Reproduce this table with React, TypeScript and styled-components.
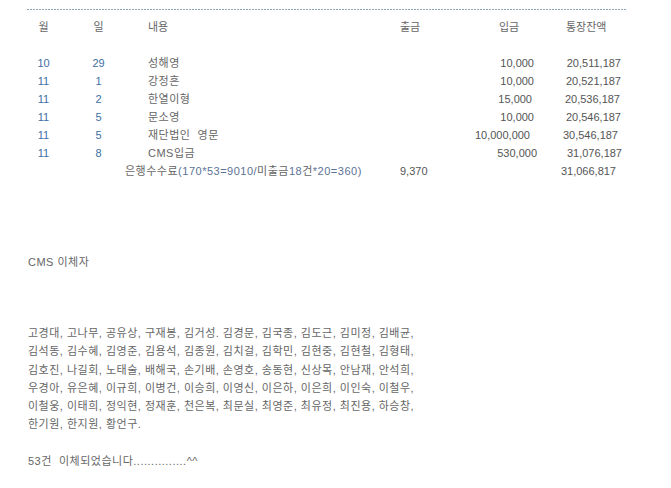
import React from "react";
import styled, { createGlobalStyle } from "styled-components";

const Global = createGlobalStyle`
  html, body { margin: 0; padding: 0; background: #fff; }
  body {
    font-family: "Liberation Sans", "Noto Sans CJK KR", sans-serif;
    font-size: 11px;
    color: #666;
  }
`;

const Page = styled.div`
  padding: 9px 27px 0 27px;
  width: 600px;
`;

const Rule = styled.div`
  height: 1px;
  width: 600px;
  background: repeating-linear-gradient(to right, #8ea4b8 0 2px, transparent 2px 3px);
`;

const Table = styled.div`
  margin-top: 8px;
  display: grid;
  grid-template-columns: 33px 77px 243px 62px 28px 78px 79px;
  grid-auto-rows: 18px;
  line-height: 18px;
  white-space: nowrap;
`;

const Cell = styled.div<{
  $align?: "left" | "center" | "right";
  $pad?: number;
  $tone?: "blue" | "num" | "text";
  $col?: number;
  $span?: number;
  $spaced?: boolean;
}>`
  text-align: ${(p) => p.$align || "left"};
  ${(p) => (p.$align === "right" ? `padding-right: ${p.$pad ?? 0}px;` : `padding-left: ${p.$pad ?? 0}px;`)}
  color: ${(p) => (p.$tone === "blue" ? "#3d6fa3" : p.$tone === "num" ? "#555" : "#666")};
  ${(p) => (p.$col ? `grid-column: ${p.$col} / span ${p.$span || 1};` : "")}
  ${(p) => (p.$spaced ? "letter-spacing: 0.5px; white-space: pre;" : "")}
  overflow: visible;
`;

const Fee = styled.span`
  color: #5a7396;
`;

const Heading = styled.div`
  margin-top: 73px;
  line-height: 18px;
  padding-left: 1px;
  letter-spacing: 0.5px;
`;

const Names = styled.div`
  margin-top: 53px;
  line-height: 18.3px;
  padding-left: 1px;
  letter-spacing: 0.5px;
`;

const Line = styled.div`
  white-space: nowrap;
`;

const Closing = styled.div`
  margin-top: 18.7px;
  line-height: 18.3px;
  padding-left: 1px;
  letter-spacing: 0.5px;
`;

type Row = { m: string; d: string; name: string; inc: string; incPad: number; bal: string; balPad: number };

const rows: Row[] = [
  { m: "10", d: "29", name: "성해영", inc: "10,000", incPad: 14, bal: "20,511,187", balPad: 6 },
  { m: "11", d: "1", name: "강정흔", inc: "10,000", incPad: 14, bal: "20,521,187", balPad: 6 },
  { m: "11", d: "2", name: "한열이형", inc: "15,000", incPad: 16, bal: "20,536,187", balPad: 7 },
  { m: "11", d: "5", name: "문소영", inc: "10,000", incPad: 14, bal: "20,546,187", balPad: 6 },
  { m: "11", d: "5", name: "재단법인  영문", inc: "10,000,000", incPad: 18, bal: "30,546,187", balPad: 9 },
  { m: "11", d: "8", name: "CMS입금", inc: "530,000", incPad: 11, bal: "31,076,187", balPad: 5 },
];

const nameLines = [
  "고경대, 고나무, 공유상, 구재봉, 김거성. 김경문, 김국종, 김도근, 김미정, 김배균,",
  "김석동, 김수혜, 김영준, 김용석, 김종원, 김치걸, 김학민, 김현중, 김현철, 김형태,",
  "김호진, 나길회, 노태술, 배해국, 손기배, 손영호, 송동현, 신상목, 안남재, 안석희,",
  "우경아, 유은혜, 이규희, 이병건, 이승희, 이영신, 이은하, 이은희, 이인숙, 이철우,",
  "이철웅, 이태희, 정익현, 정재훈, 천은복, 최문실, 최영준, 최유정, 최진용, 하승창,",
  "한기원, 한지원, 황언구.",
];

export default function App() {
  return (
    <Page>
      <Global />
      <Rule />
      <Table>
        <Cell $align="center">월</Cell>
        <Cell $align="center" $pad={-5}>일</Cell>
        <Cell $pad={11}>내용</Cell>
        <Cell $pad={20}>출금</Cell>
        <Cell />
        <Cell $pad={29}>입금</Cell>
        <Cell $pad={18}>통장잔액</Cell>

        <Cell $col={1} $span={7} />

        {rows.map((r, i) => (
          <React.Fragment key={i}>
            <Cell $align="center" $tone="blue">{r.m}</Cell>
            <Cell $align="center" $tone="blue">{r.d}</Cell>
            <Cell $pad={11} $spaced>{r.name}</Cell>
            <Cell />
            <Cell />
            <Cell $align="right" $pad={r.incPad} $tone="num">{r.inc}</Cell>
            <Cell $align="right" $pad={r.balPad} $tone="num">{r.bal}</Cell>
          </React.Fragment>
        ))}

        <Cell $col={1} $span={3} $pad={98} $spaced>
          은행수수료<Fee>(170*53=9010/</Fee>미출금<Fee>18</Fee>건<Fee>*20=360)</Fee>
        </Cell>
        <Cell $pad={20} $tone="num">9,370</Cell>
        <Cell />
        <Cell />
        <Cell $align="right" $pad={11} $tone="num">31,066,817</Cell>
      </Table>

      <Heading>CMS 이체자</Heading>

      <Names>
        {nameLines.map((l, i) => (
          <Line key={i}>{l}</Line>
        ))}
      </Names>

      <Closing>53건&nbsp; 이체되었습니다...............^^</Closing>
    </Page>
  );
}
